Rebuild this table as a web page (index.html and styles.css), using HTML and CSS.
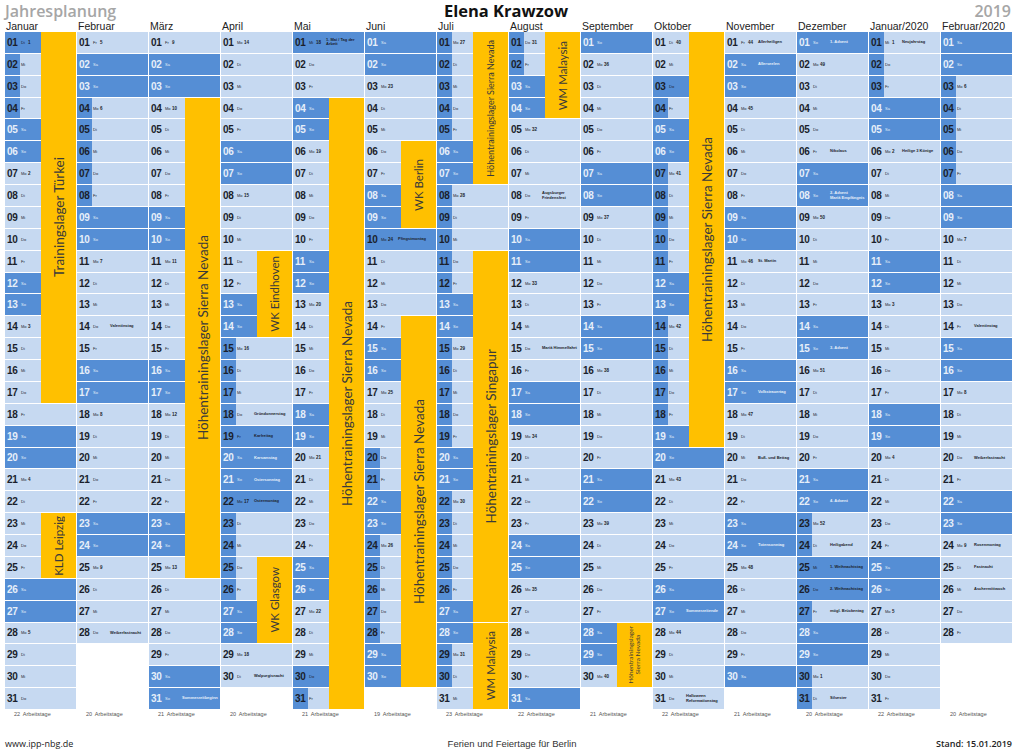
FILE: index.html
```html
<!DOCTYPE html>
<html lang="de">
<head>
<meta charset="utf-8">
<title>Jahresplanung 2019 – Elena Krawzow</title>
<link rel="stylesheet" href="styles.css">
</head>
<body>
<div class="page">
  <header class="top">
    <div class="t-left">Jahresplanung</div>
    <div class="t-center">Elena Krawzow</div>
    <div class="t-right">2019</div>
  </header>
  <div class="months">
    <div>Januar</div><div>Februar</div><div>März</div><div>April</div><div>Mai</div><div>Juni</div><div>Juli</div><div>August</div><div>September</div><div>Oktober</div><div>November</div><div>Dezember</div><div>Januar/2020</div><div>Februar/2020</div>
  </div>
  <div class="cal" id="cal"></div>
  <div class="worktime">
    <div>22&nbsp; Arbeitstage</div><div>20&nbsp; Arbeitstage</div><div>21&nbsp; Arbeitstage</div><div>20&nbsp; Arbeitstage</div><div>21&nbsp; Arbeitstage</div><div>19&nbsp; Arbeitstage</div><div>23&nbsp; Arbeitstage</div><div>22&nbsp; Arbeitstage</div><div>21&nbsp; Arbeitstage</div><div>22&nbsp; Arbeitstage</div><div>21&nbsp; Arbeitstage</div><div>20&nbsp; Arbeitstage</div><div>22&nbsp; Arbeitstage</div><div>20&nbsp; Arbeitstage</div>
  </div>
  <footer class="foot">
    <div class="f-left">www.ipp-nbg.de</div>
    <div class="f-center">Ferien und Feiertage für Berlin</div>
    <div class="f-right">Stand: 15.01.2019</div>
  </footer>
</div>
<script src="script.js"></script>
</body>
</html>
```

FILE: styles.css
```css
* { box-sizing: border-box; }
html, body { margin: 0; padding: 0; background: #fff; }
.page {
  width: 1024px;
  height: 751px;
  overflow: hidden;
  display: flex;
  flex-direction: column;
  font-family: "Liberation Sans", Arial, sans-serif;
}
.top {
  height: 20px;
  display: grid;
  grid-template-columns: 1fr auto 1fr;
  align-items: start;
  font-family: "Open Sans", sans-serif;
  font-size: 16px;
  line-height: 22px;
}
.top div { height: 22px; }
.t-left { padding-left: 5px; color: #a6a6a6; font-weight: 600; }
.t-center { color: #111; font-weight: 700; padding-right: 12px; font-size: 16.5px; }
.t-right { justify-self: end; padding-right: 13px; color: #a6a6a6; font-weight: 600; }

.months {
  margin-left: 5px;
  width: 1007px;
  height: 12px;
  display: grid;
  grid-template-columns: repeat(14, 1fr);
  column-gap: 1px;
  font-size: 10.5px;
  line-height: 12px;
  color: #222;
}
.months div { padding-left: 1px; white-space: nowrap; }

.cal {
  margin-left: 5px;
  width: 1007px;
  height: 677px;
  display: grid;
  grid-template-columns: repeat(28, minmax(0, 1fr));
  grid-template-rows: repeat(31, minmax(0, 1fr));
  column-gap: 1px;
  row-gap: 1px;
}
.cell {
  display: flex;
  align-items: center;
  background: #c6d9f1;
  color: #1b1f2c;
  overflow: hidden;
  white-space: nowrap;
}
.cell.we { background: #558ed5; color: #e6eef9; }
.cell.hol { background: #558ed5; }
.cell.fer { background: linear-gradient(to right, #558ed5 0, #558ed5 15px, #c6d9f1 15px); }
.num {
  width: 13px;
  margin-left: 2px;
  font-size: 10px;
  font-weight: 700;
  letter-spacing: -0.2px;
}
.wd { width: 8px; padding-left: 1px; font-size: 4px; }
.kw { width: 8px; font-size: 4.5px; font-weight: 700; }
.lbl {
  flex: 1;
  padding-left: 2px;
  font-size: 4px;
  font-weight: 700;
  line-height: 1.15;
  white-space: nowrap;
}

.bar {
  z-index: 1;
  background: #ffc000;
  display: flex;
  align-items: center;
  justify-content: center;
  overflow: hidden;
}
.bar span {
  writing-mode: vertical-rl;
  transform: rotate(180deg);
  font-family: Lato, "Open Sans", sans-serif;
  font-size: 13.5px;
  color: #3a3a3a;
  white-space: nowrap;
  text-align: center;
}
.bar.fit span { font-size: 11.5px; }
.bar.mid span { font-size: 9px; }
.bar.small span { font-size: 6.5px; line-height: 1.15; white-space: normal; }

.worktime {
  margin-left: 5px;
  width: 1007px;
  height: 11px;
  display: grid;
  grid-template-columns: repeat(14, 1fr);
  column-gap: 1px;
  font-size: 5.5px;
  line-height: 11px;
  color: #555;
}
.worktime div { padding-left: 9px; white-space: nowrap; }

.foot {
  margin-top: auto;
  height: 16px;
  display: grid;
  grid-template-columns: 1fr auto 1fr;
  align-items: center;
  font-size: 9px;
  color: #222;
}
.f-left { padding-left: 5px; font-family: "Open Sans", sans-serif; }
.f-center { font-family: "Liberation Sans", Arial, sans-serif; font-size: 9.5px; color: #333; }
.f-right { justify-self: end; padding-right: 12px; font-family: "Open Sans", sans-serif; font-weight: 600; }
```

FILE: script.js
```javascript
(function () {
  var MONTHS = [[2019,0,31],[2019,1,28],[2019,2,31],[2019,3,30],[2019,4,31],[2019,5,30],[2019,6,31],[2019,7,31],[2019,8,30],[2019,9,31],[2019,10,30],[2019,11,31],[2020,0,31],[2020,1,28]];
  var WD = ['So','Mo','Di','Mi','Do','Fr','Sa'];
  var HOL = ['2019-1-1','2019-4-19','2019-4-22','2019-5-1','2019-5-30','2019-6-10','2019-10-3','2019-12-25','2019-12-26'];
  var FER = [['2019-1-2','2019-1-4'],['2019-2-4','2019-2-8'],['2019-4-15','2019-4-26'],['2019-5-31','2019-5-31'],['2019-6-20','2019-7-30'],['2019-8-1','2019-8-2'],['2019-10-4','2019-10-18'],['2019-12-23','2020-1-3'],['2020-2-3','2020-2-7']];
  var LBL = {
    '2019-2-14':'Valentinstag','2019-2-28':'Weiberfastnacht','2019-3-31':'Sommerzeitbeginn',
    '2019-4-18':'Gründonnerstag','2019-4-19':'Karfreitag','2019-4-20':'Karsamstag','2019-4-21':'Ostersonntag','2019-4-22':'Ostermontag','2019-4-30':'Walpurgisnacht',
    '2019-5-1':'1. Mai / Tag der<br>Arbeit','2019-6-10':'Pfingstmontag',
    '2019-8-8':'Augsburger<br>Friedensfest','2019-8-15':'Mariä Himmelfahrt',
    '2019-10-27':'Sommerzeitende','2019-10-31':'Halloween<br>Reformationstag',
    '2019-11-1':'Allerheiligen','2019-11-2':'Allerseelen','2019-11-11':'St. Martin','2019-11-17':'Volkstrauertag','2019-11-20':'Buß- und Bettag','2019-11-24':'Totensonntag',
    '2019-12-1':'1. Advent','2019-12-6':'Nikolaus','2019-12-8':'2. Advent<br>Mariä Empfängnis','2019-12-15':'3. Advent','2019-12-22':'4. Advent','2019-12-24':'Heiligabend','2019-12-25':'1. Weihnachtstag','2019-12-26':'2. Weihnachtstag','2019-12-27':'mögl. Brückentag','2019-12-31':'Silvester',
    '2020-1-1':'Neujahrstag','2020-1-6':'Heilige 3 Könige',
    '2020-2-14':'Valentinstag','2020-2-20':'Weiberfastnacht','2020-2-24':'Rosenmontag','2020-2-25':'Fastnacht','2020-2-26':'Aschermittwoch'
  };
  var BARS = [
    [0,1,17,'Trainingslager Türkei',''],
    [0,23,25,'KLD Leipzig','fit'],
    [2,4,25,'Höhentrainingslager Sierra Nevada',''],
    [3,11,14,'WK Eindhoven','fit'],
    [3,25,28,'WK Glasgow','fit'],
    [4,4,31,'Höhentrainingslager Sierra Nevada',''],
    [5,6,9,'WK Berlin','fit'],
    [5,14,30,'Höhentrainingslager Sierra Nevada',''],
    [6,1,7,'Höhentrainingslager Sierra Nevada','mid'],
    [6,11,27,'Höhentrainingslager Singapur',''],
    [6,28,31,'WM Malaysia','fit'],
    [7,1,4,'WM Malaysia','fit'],
    [8,28,30,'Höhentrainingslager<br>Sierra Nevada','small'],
    [9,1,19,'Höhentrainingslager Sierra Nevada','']
  ];
  var NO_FER = ['2019-7-31'];

  function parse(s) { var p = s.split('-'); return new Date(+p[0], +p[1]-1, +p[2]).getTime(); }
  function isoWeek(date) {
    var t = new Date(Date.UTC(date.getFullYear(), date.getMonth(), date.getDate()));
    var day = t.getUTCDay() || 7;
    t.setUTCDate(t.getUTCDate() + 4 - day);
    var y0 = new Date(Date.UTC(t.getUTCFullYear(), 0, 1));
    return Math.ceil(((t - y0) / 86400000 + 1) / 7);
  }
  var ferR = FER.map(function (r) { return [parse(r[0]), parse(r[1])]; });

  var cal = document.getElementById('cal');
  var html = '';
  MONTHS.forEach(function (mm, i) {
    for (var d = 1; d <= mm[2]; d++) {
      var date = new Date(mm[0], mm[1], d);
      var key = mm[0] + '-' + (mm[1]+1) + '-' + d;
      var w = date.getDay();
      var cls = 'cell';
      var ts = date.getTime();
      if (w === 0 || w === 6) cls += ' we';
      else if (HOL.indexOf(key) >= 0) cls += ' hol';
      else if (NO_FER.indexOf(key) < 0 && ferR.some(function (r) { return ts >= r[0] && ts <= r[1]; })) cls += ' fer';
      var kw = (w === 1 || (d === 1 && w !== 0 && w !== 6)) ? isoWeek(date) : '';
      var lbl = LBL[key] || '';
      html += '<div class="' + cls + '" style="grid-column:' + (2*i+1) + ' / span 2;grid-row:' + d + '">' +
        '<b class="num">' + (d < 10 ? '0' + d : d) + '</b>' +
        '<span class="wd">' + WD[w] + '</span>' +
        '<span class="kw">' + kw + '</span>' +
        '<span class="lbl">' + lbl + '</span></div>';
    }
  });
  BARS.forEach(function (b) {
    html += '<div class="bar' + (b[4] ? ' ' + b[4] : '') + '" style="grid-column:' + (2*b[0]+2) + ';grid-row:' + b[1] + ' / ' + (b[2]+1) + '"><span>' + b[3] + '</span></div>';
  });
  cal.innerHTML = html;
})();
```
